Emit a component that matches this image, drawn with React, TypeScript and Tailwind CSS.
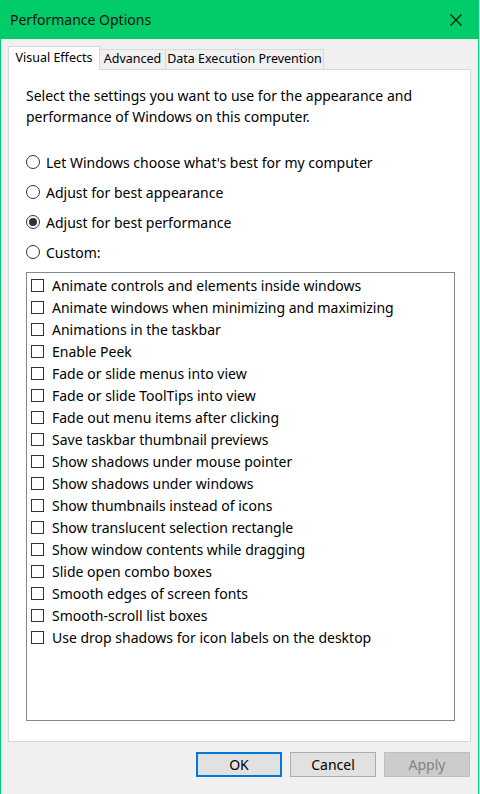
import { useState } from "react";

const effects = [
  "Animate controls and elements inside windows",
  "Animate windows when minimizing and maximizing",
  "Animations in the taskbar",
  "Enable Peek",
  "Fade or slide menus into view",
  "Fade or slide ToolTips into view",
  "Fade out menu items after clicking",
  "Save taskbar thumbnail previews",
  "Show shadows under mouse pointer",
  "Show shadows under windows",
  "Show thumbnails instead of icons",
  "Show translucent selection rectangle",
  "Show window contents while dragging",
  "Slide open combo boxes",
  "Smooth edges of screen fonts",
  "Smooth-scroll list boxes",
  "Use drop shadows for icon labels on the desktop",
];

const modes = [
  "Let Windows choose what's best for my computer",
  "Adjust for best appearance",
  "Adjust for best performance",
  "Custom:",
];

function Radio({ label, checked, onSelect }: { label: string; checked: boolean; onSelect: () => void }) {
  return (
    <div className="flex items-center h-[30px] cursor-default" onClick={onSelect}>
      <span className="w-[14px] h-[14px] rounded-full border border-[#333333] bg-white flex items-center justify-center">
        {checked && <span className="w-[8px] h-[8px] rounded-full bg-[#333333]" />}
      </span>
      <span className="ml-[6px]">{label}</span>
    </div>
  );
}

function Check({ label, checked, onToggle }: { label: string; checked: boolean; onToggle: () => void }) {
  return (
    <div className="flex items-center h-[22px] pl-[4px] cursor-default" onClick={onToggle}>
      <span className="w-[13px] h-[13px] border border-[#333333] bg-white flex items-center justify-center">
        {checked && (
          <svg width="9" height="9" viewBox="0 0 9 9">
            <path d="M1 4.5 L3.5 7 L8 1.5" fill="none" stroke="#333" strokeWidth="1.5" />
          </svg>
        )}
      </span>
      <span className="ml-[8px]">{label}</span>
    </div>
  );
}

export default function App() {
  const [mode, setMode] = useState(2);
  const [checks, setChecks] = useState<boolean[]>(effects.map(() => false));

  return (
    <div
      className="w-[479px] h-[794px] bg-[#f0f0f0] border-x border-[#00cc6a] flex flex-col text-[14px] text-black"
      style={{ fontFamily: '"Noto Sans", "Open Sans", sans-serif' }}
    >
      {/* title bar */}
      <div className="h-[39px] bg-[#00cc6a] flex items-center justify-between pl-[9px] pr-[16px] shrink-0">
        <span className="text-[14px] text-[#111]">Performance Options</span>
        <svg width="12" height="12" viewBox="0 0 12 12">
          <path d="M0.5 0.5 L11.5 11.5 M11.5 0.5 L0.5 11.5" stroke="#111" strokeWidth="1.1" />
        </svg>
      </div>

      <div className="flex flex-col px-[7px] pt-[8px]">
        {/* tabs */}
        <div className="flex items-end h-[23px] relative z-10 text-[12.5px]">
          <div className="w-[92px] h-[24px] bg-white border border-b-0 border-[#d9d9d9] flex items-center justify-center">
            Visual Effects
          </div>
          <div className="w-[66px] h-[21px] bg-[#f0f0f0] border border-l-0 border-[#d9d9d9] flex items-center justify-center">
            Advanced
          </div>
          <div className="w-[158px] h-[21px] bg-[#f0f0f0] border border-l-0 border-[#d9d9d9] flex items-center justify-center">
            Data Execution Prevention
          </div>
        </div>

        {/* panel */}
        <div className="h-[673px] bg-white border border-[#d9d9d9] -mt-px pl-[17px] pr-[15px] flex flex-col">
          <p className="mt-[15px] leading-[21px]">
            Select the settings you want to use for the appearance and
            <br />
            performance of Windows on this computer.
          </p>

          <div className="mt-[20px] flex flex-col">
            {modes.map((m, i) => (
              <Radio key={m} label={m} checked={mode === i} onSelect={() => setMode(i)} />
            ))}
          </div>

          <div className="mt-[5px] h-[449px] border border-[#828790] bg-white pt-px flex flex-col">
            {effects.map((e, i) => (
              <Check
                key={e}
                label={e}
                checked={checks[i]}
                onToggle={() => setChecks(prev => prev.map((c, j) => (j === i ? !c : c)))}
              />
            ))}
          </div>
        </div>

        {/* buttons */}
        <div className="flex justify-end gap-[8px] mt-[10px] pr-[1px]">
          <button className="w-[86px] h-[25px] bg-[#e1e1e1] border-2 border-[#0078d7] text-[14px]">OK</button>
          <button className="w-[86px] h-[25px] bg-[#e1e1e1] border border-[#adadad] text-[14px]">Cancel</button>
          <button className="w-[86px] h-[25px] bg-[#cccccc] border border-[#bfbfbf] text-[14px] text-[#838383]">
            Apply
          </button>
        </div>
      </div>
    </div>
  );
}
